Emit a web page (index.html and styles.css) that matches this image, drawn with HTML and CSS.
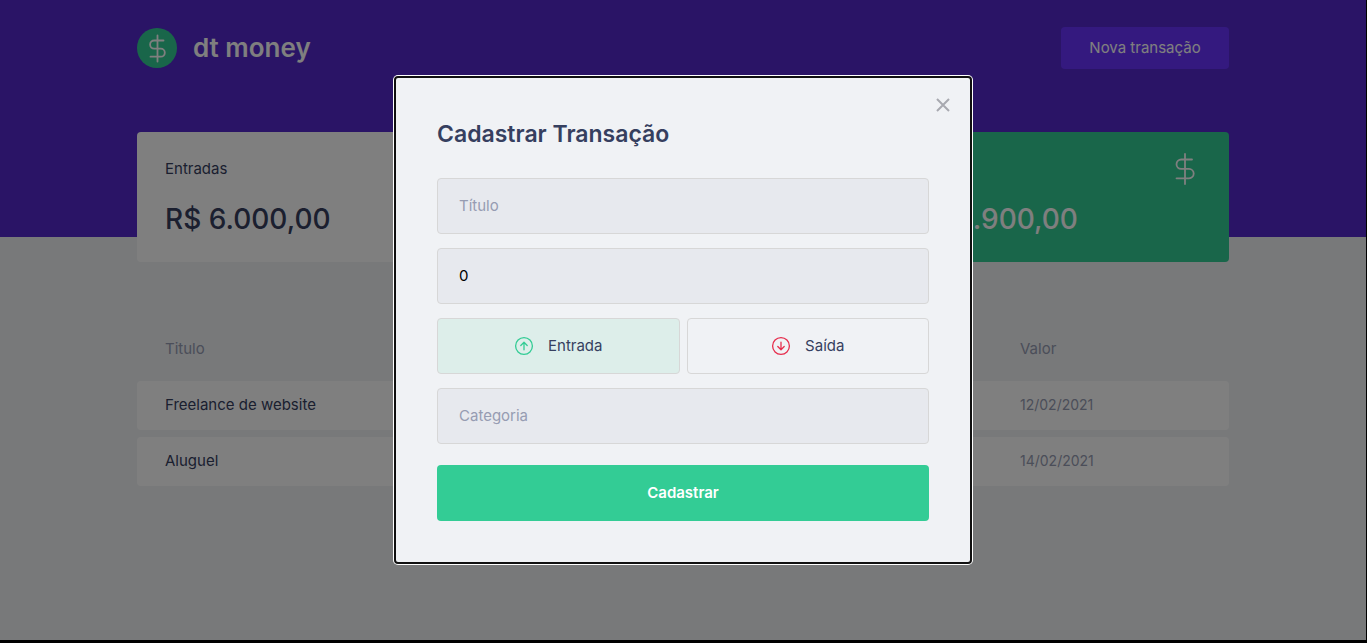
FILE: index.html
```html
<!DOCTYPE html>
<html lang="pt-BR">
<head>
<meta charset="utf-8">
<meta name="viewport" content="width=device-width, initial-scale=1">
<title>dt money</title>
<link rel="stylesheet" href="styles.css">
</head>
<body>
<header class="header">
  <div class="header-content">
    <div class="logo">
      <svg class="logo-mark" viewBox="0 0 40 40" aria-hidden="true">
        <circle cx="20" cy="20" r="20" fill="#33cc95"/>
        <path d="M20.5 7.500V33.500M26.500 12.500H17.200a4.100 4.100 0 0 0 0 8.200H23.800a4 4 0 0 1 0 8H13.500" fill="none" stroke="#fff" stroke-width="1.800" stroke-linecap="round"/>
      </svg>
      <span class="logo-name">dt money</span>
    </div>
    <button type="button" class="new-button">Nova transação</button>
  </div>
</header>
<main class="container">
  <section class="summary">
    <div class="card">
      <div class="card-head"><p>Entradas</p></div>
      <strong>R$ 6.000,00</strong>
    </div>
    <div class="card card-total">
      <div class="card-head">
        <p>Total</p>
        <svg class="card-icon" viewBox="0 0 32 32" aria-hidden="true">
          <path d="M16 1V31M23 6.500H12.200a4.700 4.700 0 0 0 0 9.400H20a4.700 4.700 0 0 1 0 9.400H7.500" fill="none" stroke="#fff" stroke-width="1.800" stroke-linecap="round"/>
        </svg>
      </div>
      <strong>R$ 4.900,00</strong>
    </div>
  </section>
  <table class="transactions">
    <thead>
      <tr><th>Titulo</th><th class="col-last">Valor</th></tr>
    </thead>
    <tbody>
      <tr><td class="title">Freelance de website</td><td class="date">12/02/2021</td></tr>
      <tr><td class="title">Aluguel</td><td class="date">14/02/2021</td></tr>
    </tbody>
  </table>
</main>
<div class="overlay">
  <div class="modal" role="dialog" aria-modal="true" aria-labelledby="modal-title">
    <button type="button" class="close" aria-label="Fechar">
      <svg viewBox="0 0 14 14" aria-hidden="true"><path d="M1 1L13 13M13 1L1 13" fill="none" stroke="#a8a9b0" stroke-width="2"/></svg>
    </button>
    <form class="form">
      <h2 id="modal-title">Cadastrar Transação</h2>
      <input type="text" placeholder="Título" aria-label="Título">
      <input type="text" inputmode="numeric" value="0" aria-label="Valor">
      <div class="types">
        <button type="button" class="type type-in" aria-pressed="true">
          <svg viewBox="0 0 20 20" aria-hidden="true"><g fill="none" stroke="#33cc95" stroke-width="1.300" stroke-linecap="round" stroke-linejoin="round"><circle cx="10" cy="10" r="8.400"/><path d="M10 13.800V6.500M6.800 9.500L10 6.300L13.200 9.500"/></g></svg>
          <span>Entrada</span>
        </button>
        <button type="button" class="type" aria-pressed="false">
          <svg viewBox="0 0 20 20" aria-hidden="true"><g fill="none" stroke="#e62e4d" stroke-width="1.300" stroke-linecap="round" stroke-linejoin="round"><circle cx="10" cy="10" r="8.400"/><path d="M10 6.200V13.500M6.800 10.500L10 13.700L13.200 10.500"/></g></svg>
          <span>Saída</span>
        </button>
      </div>
      <input type="text" placeholder="Categoria" aria-label="Categoria">
      <button type="submit" class="submit">Cadastrar</button>
    </form>
  </div>
</div>
</body>
</html>
```

FILE: styles.css
```css
* { box-sizing: border-box; margin: 0; padding: 0; }
body {
  position: relative;
  min-height: 100vh;
  background: #f0f2f5;
  border: solid #000;
  border-width: 0 1px 3px 0;
  color: #969cb2;
}
body, button, input { font-family: Inter, "Open Sans", sans-serif; font-size: 15px; line-height: 21px; }
button { cursor: pointer; border: 0; }
.header { background: #5429cc; }
.header-content {
  display: flex;
  align-items: center;
  justify-content: space-between;
  max-width: 1120px;
  margin: 0 auto;
  padding: 27px 14px 168px;
}
.logo { display: flex; align-items: center; gap: 16px; }
.logo-mark { width: 40px; height: 40px; }
.logo-name { color: #fff; font-size: 26px; font-weight: 600; line-height: 40px; }
.new-button {
  height: 42px;
  min-width: 168px;
  padding: 0 28px 2px;
  border-radius: 4px;
  background: #6933ff;
  color: #fff;
  white-space: nowrap;
}
.container { max-width: 1120px; margin: 0 auto; padding: 0 14px; }
.summary { display: grid; grid-template-columns: repeat(3, 1fr); gap: 28px; margin-top: -105px; }
.card { padding: 21px 28px 22px; border-radius: 4px; background: #fff; color: #363f5f; }
.card-head { display: flex; align-items: center; justify-content: space-between; height: 32px; }
.card-head p { padding-bottom: 2px; }
.card-icon { width: 32px; height: 32px; }
.card strong { display: block; margin-top: 13px; font-size: 28px; font-weight: 500; line-height: 42px; white-space: nowrap; }
.card-total { grid-column: 3; background: #33cc95; color: #fff; }
.transactions { width: 100%; margin-top: 56px; border-spacing: 0 7px; }
.transactions th { padding: 13px 28px 15px; font-weight: 400; text-align: left; }
.transactions td { padding: 13px 28px 15px; background: #fff; }
.transactions td:first-child { border-radius: 4px 0 0 4px; }
.transactions td:last-child { border-radius: 0 4px 4px 0; }
.transactions .title { color: #363f5f; }
.transactions .date { font-size: 14px; }
.col-last { width: 237px; }
.overlay {
  position: absolute;
  inset: 0;
  display: flex;
  align-items: center;
  justify-content: center;
  background: rgba(0, 0, 0, 0.5);
}
.modal {
  position: relative;
  width: 100%;
  max-width: 576px;
  padding: 42px;
  border-radius: 3px;
  background: #f0f2f5;
  outline: 2px solid #101010;
  outline-offset: -1px;
  box-shadow: 0 0 0 2px #fff;
}
.close { position: absolute; top: 21px; right: 21px; width: 14px; height: 14px; background: none; }
.close svg { display: block; width: 14px; height: 14px; }
.form { display: flex; flex-direction: column; gap: 14px; }
.form h2 { margin-bottom: 14px; color: #363f5f; font-size: 23px; font-weight: 600; line-height: 31px; }
.form input {
  width: 100%;
  height: 56px;
  padding: 0 21px 2px;
  border: 1px solid #d7d7d7;
  border-radius: 4px;
  background: #e7e9ee;
  color: #000;
}
.form input::placeholder { color: #969cb2; opacity: 1; }
.types { display: grid; grid-template-columns: 1fr 1fr; gap: 7px; }
.type {
  display: flex;
  align-items: center;
  justify-content: center;
  gap: 14px;
  height: 56px;
  border: 1px solid #d7d7d7;
  border-radius: 4px;
  background: transparent;
  color: #363f5f;
}
.type svg { width: 20px; height: 20px; }
.type span { padding-bottom: 2px; }
.type-in { background: #ddeeea; }
.submit { height: 56px; margin-top: 7px; padding-bottom: 2px; border-radius: 4px; background: #33cc95; color: #fff; font-weight: 600; }
```
